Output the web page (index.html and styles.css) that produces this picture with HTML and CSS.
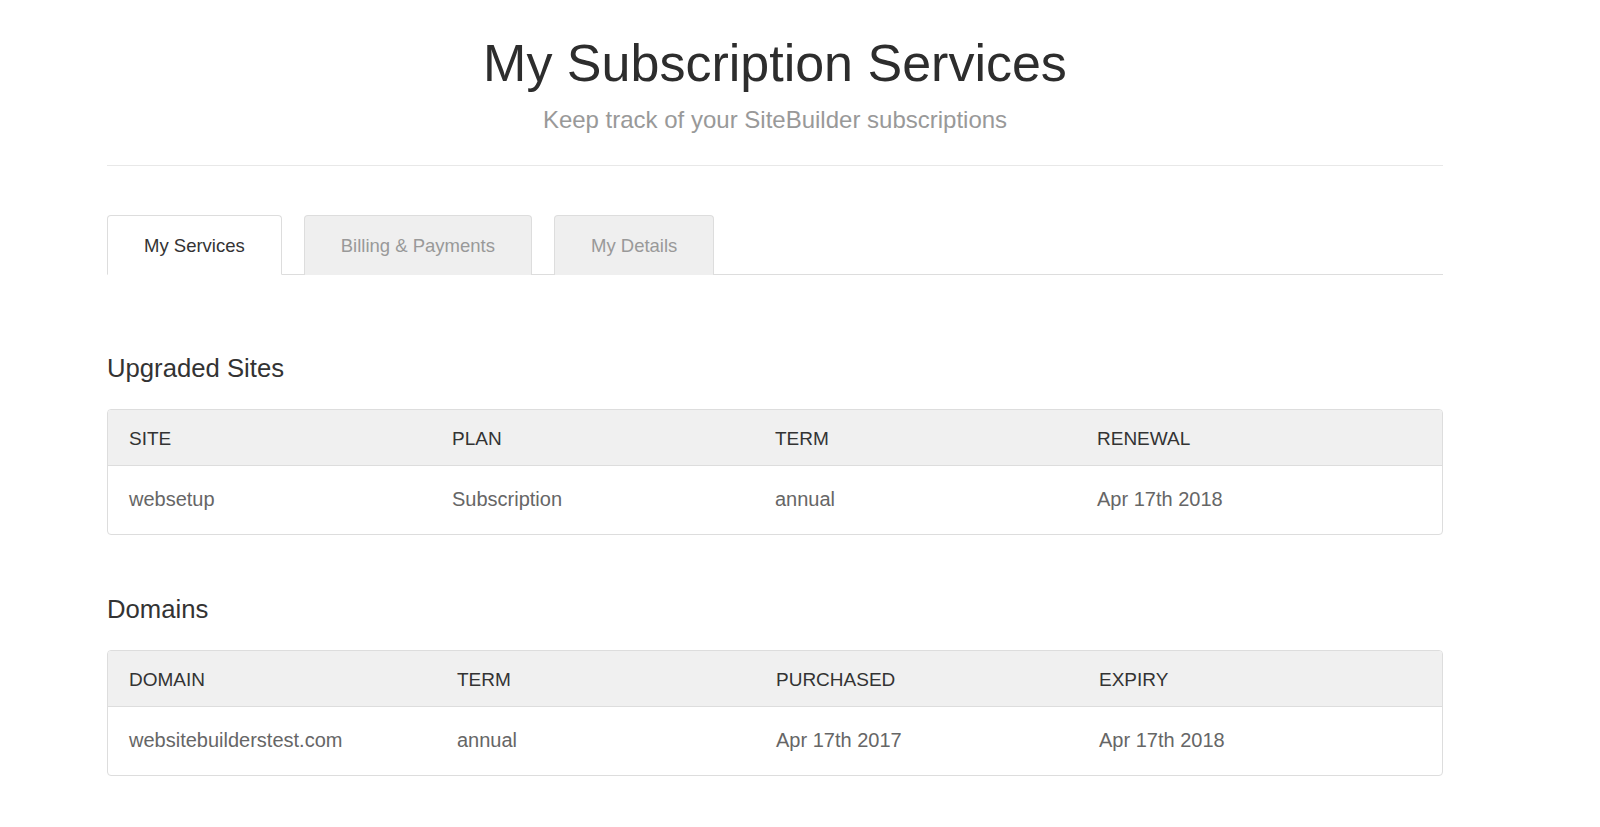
FILE: index.html
```html
<!DOCTYPE html>
<html lang="en">
<head>
<meta charset="utf-8">
<title>My Subscription Services</title>
<link rel="stylesheet" href="styles.css">
</head>
<body>
<div class="page">
  <header class="page-header">
    <h1 class="title">My Subscription Services</h1>
    <p class="subtitle">Keep track of your SiteBuilder subscriptions</p>
  </header>

  <nav class="tabs">
    <a class="tab tab-active">My Services</a>
    <a class="tab">Billing &amp; Payments</a>
    <a class="tab">My Details</a>
  </nav>

  <section class="section section-first">
    <h2 class="section-title">Upgraded Sites</h2>
    <div class="table-box">
      <table class="data">
        <colgroup><col class="c-a1"><col class="c-a2"><col class="c-a3"><col></colgroup>
        <thead>
          <tr><th>SITE</th><th>PLAN</th><th>TERM</th><th>RENEWAL</th></tr>
        </thead>
        <tbody>
          <tr><td>websetup</td><td>Subscription</td><td>annual</td><td>Apr 17th 2018</td></tr>
        </tbody>
      </table>
    </div>
  </section>

  <section class="section">
    <h2 class="section-title">Domains</h2>
    <div class="table-box">
      <table class="data">
        <colgroup><col class="c-b1"><col class="c-b2"><col class="c-b3"><col></colgroup>
        <thead>
          <tr><th>DOMAIN</th><th>TERM</th><th>PURCHASED</th><th>EXPIRY</th></tr>
        </thead>
        <tbody>
          <tr><td>websitebuilderstest.com</td><td>annual</td><td>Apr 17th 2017</td><td>Apr 17th 2018</td></tr>
        </tbody>
      </table>
    </div>
  </section>
</div>
</body>
</html>
```

FILE: styles.css
```css
* { box-sizing: border-box; }

html, body {
  margin: 0;
  padding: 0;
  background: #fff;
}

body {
  font-family: "Liberation Sans", Arial, Helvetica, sans-serif;
  color: #333;
}

.page {
  width: 1336px;
  margin-left: 107px;
  padding-top: 32px;
  padding-bottom: 60px;
}

.page-header {
  text-align: center;
  border-bottom: 1px solid #e8e8e8;
  padding-bottom: 31px;
}

.title {
  margin: 0;
  font-size: 52px;
  line-height: 62px;
  font-weight: normal;
  color: #2d2d2d;
}

.subtitle {
  margin: 11px 0 0;
  font-size: 24px;
  line-height: 29px;
  color: #999;
}

.tabs {
  display: flex;
  gap: 22px;
  margin-top: 49px;
  border-bottom: 1px solid #ddd;
}

.tab {
  display: block;
  padding: 19px 36px 18px;
  font-size: 18.5px;
  line-height: 22px;
  color: #999;
  background: #efefef;
  border: 1px solid #ddd;
  border-bottom: none;
  border-radius: 4px 4px 0 0;
  margin-bottom: -1px;
  height: 60px;
}

.tab-active {
  background: #fff;
  color: #333;
  border-bottom: 1px solid #fff;
}

.section {
  margin-top: 59px;
}

.section-first {
  margin-top: 78px;
}

.section-title {
  margin: 0 0 26px;
  font-size: 25.7px;
  line-height: 30px;
  font-weight: normal;
  color: #333;
}

.table-box {
  border: 1px solid #ddd;
  border-radius: 4px;
  overflow: hidden;
}

.data {
  width: 100%;
  border-collapse: collapse;
  table-layout: fixed;
  line-height: 23px;
}

.data th {
  text-align: left;
  font-weight: normal;
  font-size: 19px;
  color: #333;
  background: #f0f0f0;
  padding: 17px 21px 15px;
  border-bottom: 1px solid #ddd;
}

.data td {
  font-size: 20px;
  color: #666;
  padding: 22px 21px 23px;
}

.c-a1 { width: 323px; }
.c-a2 { width: 323px; }
.c-a3 { width: 322px; }

.c-b1 { width: 328px; }
.c-b2 { width: 319px; }
.c-b3 { width: 323px; }
```
